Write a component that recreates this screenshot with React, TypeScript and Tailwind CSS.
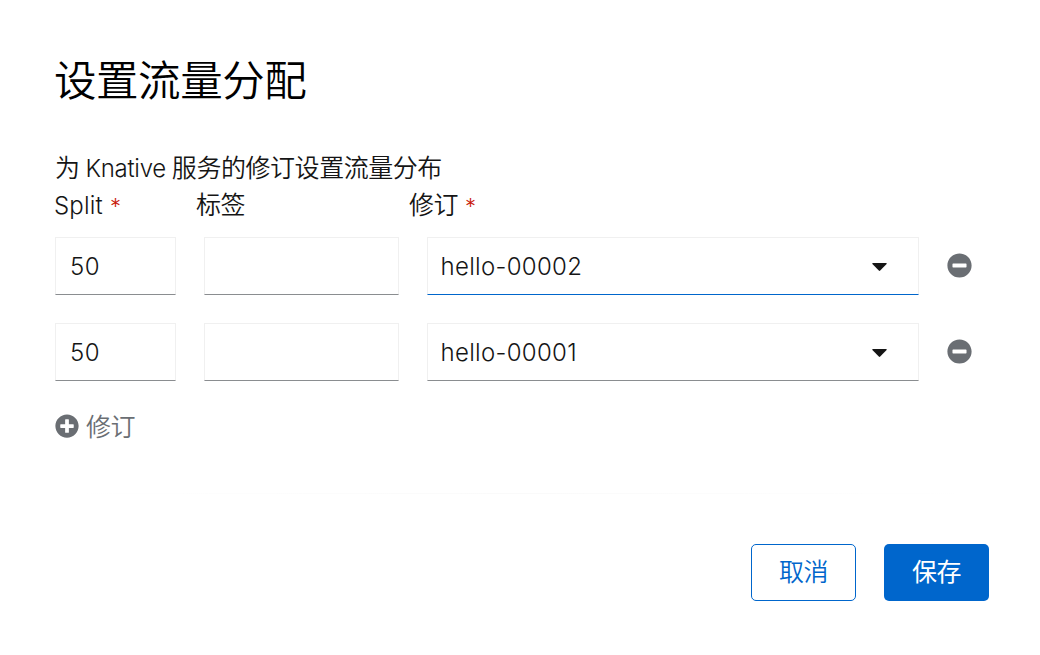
import React, { useState } from 'react'
import { FaMinusCircle, FaPlusCircle } from 'react-icons/fa'

type Split = {
	percent: string
	tag: string
	revision: string
}

const initialSplits: Split[] = [
	{ percent: '50', tag: '', revision: 'hello-00002' },
	{ percent: '50', tag: '', revision: 'hello-00001' }
]

const field =
	'h-[58px] border border-[#f0f0f0] border-b-[#8a8d90] bg-white text-[#151515] outline-none'

function Required() {
	return <span className="ml-[7px] text-[22px] font-light text-[#c9190b]">*</span>
}

function Caret() {
	return (
		<svg className="h-2 w-[15px]" viewBox="0 0 15 8" fill="currentColor">
			<path d="M.4 0h14.2v1.1L8.2 7.6a1 1 0 0 1-1.4 0L.4 1.1z" />
		</svg>
	)
}

function App() {
	const [splits, setSplits] = useState(initialSplits)
	const [active, setActive] = useState(0)

	const update = (index: number, change: Partial<Split>) => {
		setSplits((prev) => prev.map((s, i) => (i === index ? { ...s, ...change } : s)))
	}

	const remove = (index: number) => {
		setSplits((prev) => prev.filter((_, i) => i !== index))
	}

	const add = () => {
		setSplits((prev) => [...prev, { percent: '', tag: '', revision: '' }])
	}

	return (
		<div className="flex h-[655px] w-[1040px] flex-col bg-white pr-[51px] pl-[55px] font-[Inter,'Noto_Sans_CJK_SC',sans-serif] text-[25px] font-[350] tracking-[-0.45px] text-[#151515]">
			<h1 className="mt-[51px] -ml-px h-[60px] text-[42.5px] leading-[60px] font-[350] text-black">
				设置流量分配
			</h1>

			<p className="mt-[39px] h-9 leading-9 whitespace-nowrap">
				为<span className="mr-[6px] ml-[6px] text-[24px] font-light tracking-[-0.3px]">Knative</span>服务的修订设置流量分布
			</p>

			{/* Column labels */}
			<div className="flex h-9 pt-px leading-9">
				<div className="-ml-px w-[142px]">
					<span className="text-[24px] font-light tracking-[0.2px]">Split</span>
					<Required />
				</div>
				<div className="w-[213px]">标签</div>
				<div>
					修订
					<Required />
				</div>
			</div>

			<div className="mt-[15px] flex flex-col gap-7">
				{splits.map((split, index) => (
					<div key={index} className="flex items-center gap-7">
						<input
							value={split.percent}
							onChange={(e) => update(index, { percent: e.target.value })}
							className={`${field} w-[121px] px-[14px] text-[24px] font-light tracking-[0.6px]`}
						/>
						<input
							value={split.tag}
							onChange={(e) => update(index, { tag: e.target.value })}
							className={`${field} w-[195px] px-[14px]`}
						/>
						<button
							type="button"
							onClick={() => setActive(index)}
							className={`${field} flex w-[492px] items-center justify-between pt-0.5 pr-[31px] pl-[12.5px] text-[24px] font-light tracking-[0.3px] ${
								index === active ? 'border-b-[#0066cc]' : ''
							}`}
						>
							{split.revision}
							<Caret />
						</button>
						<button type="button" onClick={() => remove(index)} className="mb-0.5 text-[#6a6e73]">
							<FaMinusCircle className="h-[25px] w-[25px]" />
						</button>
					</div>
				))}
			</div>

			<button
				type="button"
				onClick={add}
				className="mt-7 flex h-9 items-center gap-[7px] self-start leading-9 text-[#6a6e73]"
			>
				<FaPlusCircle className="mb-0.5 h-6 w-6" />
				修订
			</button>

			<div className="mt-[48px] h-px bg-linear-to-r from-white via-[#fafafa] to-white" />

			<div className="mt-[50px] flex justify-end gap-7">
				<button
					type="button"
					className="h-[57px] w-[105px] rounded-[5px] border border-[#0066cc] bg-white text-[#0066cc]"
				>
					取消
				</button>
				<button
					type="button"
					className="h-[57px] w-[105px] rounded-[5px] bg-[#0066cc] font-normal text-white"
				>
					保存
				</button>
			</div>
		</div>
	)
}

export default App
